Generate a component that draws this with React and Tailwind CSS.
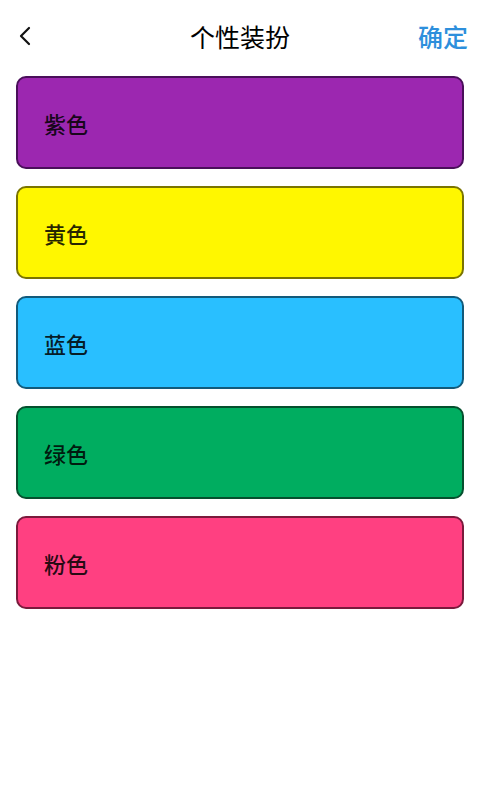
import React from "react";

const items = [
  { label: "紫色", cls: "bg-[#9c27b0] border-[#4a0f5a]" },
  { label: "黄色", cls: "bg-[#fff700] border-[#7a7400]" },
  { label: "蓝色", cls: "bg-[#29bfff] border-[#125a7a]" },
  { label: "绿色", cls: "bg-[#00ad60] border-[#05502e]" },
  { label: "粉色", cls: "bg-[#ff4081] border-[#7a1a3c]" },
];

export default function App() {
  return (
    <div
      className="w-[480px] h-[800px] bg-white"
      style={{ fontFamily: '"Noto Sans CJK SC", "Noto Sans", sans-serif' }}
    >
      <div className="h-[76px] flex items-center justify-between px-[12px] pb-[4px]">
        <div className="w-[60px] flex items-center pl-[6px]">
          <svg width="16" height="20" viewBox="0 0 16 20" fill="none">
            <path d="M11 2 L3 10 L11 18" stroke="#111" strokeWidth="2.2" strokeLinecap="round" strokeLinejoin="round" />
          </svg>
        </div>
        <div className="text-[25px] leading-none text-black">个性装扮</div>
        <div className="w-[60px] text-right text-[25px] leading-none text-[#2d8fdc] font-medium">确定</div>
      </div>
      <div className="flex flex-col gap-[17px] px-[16px]">
        {items.map((it) => (
          <div
            key={it.label}
            className={`h-[93px] rounded-[10px] border-2 flex items-center pl-[26px] ${it.cls}`}
          >
            <span className="text-[22px] leading-none text-black/85 font-medium">{it.label}</span>
          </div>
        ))}
      </div>
    </div>
  );
}
